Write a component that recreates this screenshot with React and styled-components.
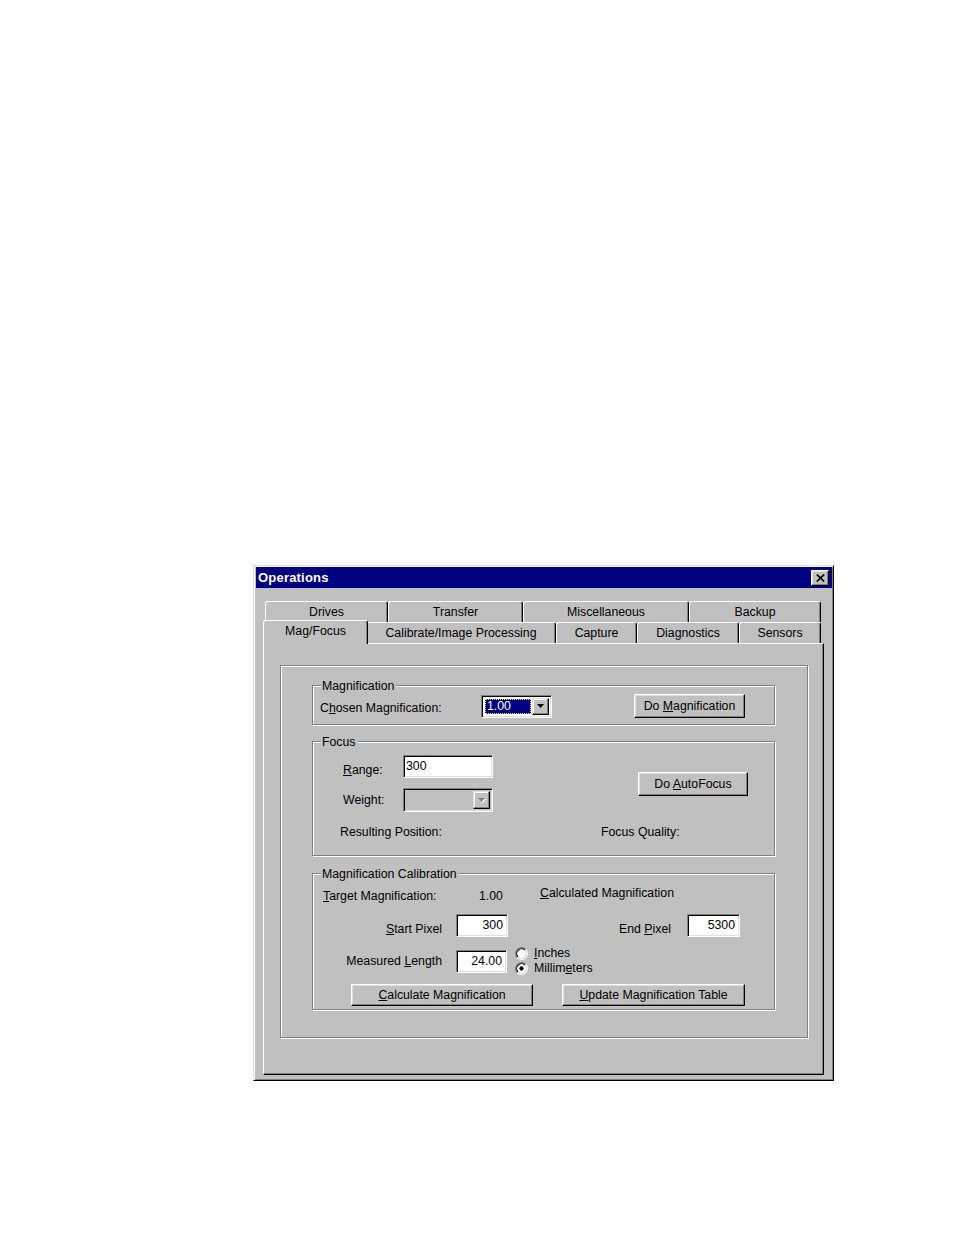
import React from 'react';
import styled, { createGlobalStyle, css } from 'styled-components';

const FACE = '#c0c0c0';

const Global = createGlobalStyle`
  html, body { margin: 0; padding: 0; background: #fff; }
  body {
    font-family: "Liberation Sans", Arial, sans-serif;
    font-size: 12.3px;
    color: #000;
  }
`;

const Page = styled.div`
  box-sizing: border-box;
  min-height: 1235px;
  padding: 565px 0 0 253px;
`;

const Window = styled.div`
  box-sizing: border-box;
  width: 581px;
  height: 516px;
  background: ${FACE};
  border: 1px solid;
  border-color: #dfdfdf #000 #000 #dfdfdf;
  box-shadow: inset 1px 1px #fff, inset -1px -1px #808080;
  padding: 1px 1px 1px 2px;
  display: flex;
  flex-direction: column;
`;

const TitleBar = styled.div`
  height: 21px;
  flex-shrink: 0;
  background: #000080;
  display: flex;
  align-items: center;
  justify-content: space-between;
  padding: 0 3px 0 2px;
`;

const Title = styled.span`
  color: #fff;
  font-weight: bold;
  font-size: 13px;
  letter-spacing: 0.2px;
`;

const CloseButton = styled.div`
  box-sizing: border-box;
  width: 18px;
  height: 16px;
  background: ${FACE};
  border: 1px solid;
  border-color: #fff #000 #000 #fff;
  box-shadow: inset -1px -1px #808080, inset 1px 1px #dfdfdf;
  display: flex;
  align-items: center;
  justify-content: center;
`;

const Body = styled.div`
  flex: 1;
  display: flex;
  flex-direction: column;
  padding: 13px 8px 4px 7px;
`;

const TabStrip = styled.div`
  display: flex;
  flex-direction: column;
  padding: 0 2px;
`;

const TabRow = styled.div`
  display: flex;
  height: 21px;
`;

const Tab = styled.div`
  box-sizing: border-box;
  flex-shrink: 0;
  width: ${p => p.$w}px;
  height: 21px;
  display: flex;
  align-items: center;
  justify-content: center;
  background: ${FACE};
  border-top: 1px solid #fff;
  border-left: 1px solid #fff;
  border-right: 1px solid #000;
  border-radius: 3px 3px 0 0;
  box-shadow: inset -1px 0 #808080;
  white-space: nowrap;
  ${p => p.$active && css`
    position: relative;
    z-index: 2;
    width: ${p.$w + 4}px;
    height: 24px;
    margin: -2px -2px -1px;
    padding-bottom: 4px;
  `}
`;

const Panel = styled.div`
  box-sizing: border-box;
  flex: 1;
  background: ${FACE};
  border: 1px solid;
  border-color: #fff #000 #000 #fff;
  box-shadow: inset -1px -1px #808080;
  padding: 21px 15px 0 16px;
`;

const Frame = styled.div`
  box-sizing: border-box;
  height: 373px;
  border: 1px solid #808080;
  box-shadow: inset 1px 1px #fff, 1px 1px #fff;
  padding: 19px 32px 0 31px;
  display: flex;
  flex-direction: column;
`;

const Group = styled.div`
  box-sizing: border-box;
  height: ${p => p.$h}px;
  margin-top: ${p => p.$mt || 0}px;
  border: 1px solid #808080;
  box-shadow: inset 1px 1px #fff, 1px 1px #fff;
  display: flex;
  flex-direction: column;
  flex-shrink: 0;
`;

const Legend = styled.span`
  align-self: flex-start;
  margin: -7px 0 0 8px;
  padding: 0 2px 0 1px;
  line-height: 15px;
  background: ${FACE};
  white-space: nowrap;
`;

const Row = styled.div`
  display: flex;
  align-items: center;
  margin-top: ${p => p.$mt || 0}px;
  padding-left: ${p => p.$pl || 0}px;
  min-height: ${p => p.$h || 15}px;
`;

const Label = styled.span`
  flex-shrink: 0;
  width: ${p => (p.$w ? `${p.$w}px` : 'auto')};
  text-align: ${p => p.$align || 'left'};
  margin-right: ${p => p.$mr || 0}px;
  position: relative;
  top: ${p => p.$dy || 0}px;
  line-height: 15px;
  white-space: nowrap;
`;

const Key = styled.span`
  text-decoration: underline;
  text-underline-offset: 1px;
`;

const Button = styled.div`
  box-sizing: border-box;
  flex-shrink: 0;
  width: ${p => p.$w}px;
  height: ${p => p.$h || 24}px;
  margin-left: ${p => p.$ml || 0}px;
  background: ${FACE};
  border: 1px solid;
  border-color: #fff #000 #000 #fff;
  box-shadow: inset -1px -1px #808080, inset 1px 1px #dfdfdf;
  display: flex;
  align-items: center;
  justify-content: center;
  white-space: nowrap;
`;

const Field = styled.div`
  box-sizing: border-box;
  flex-shrink: 0;
  width: ${p => p.$w}px;
  height: ${p => p.$h || 23}px;
  background: ${p => (p.$disabled ? FACE : '#fff')};
  border: 1px solid;
  border-color: #808080 #fff #fff #808080;
  box-shadow: inset 1px 1px #000, inset -1px -1px #dfdfdf;
  display: flex;
  align-items: center;
  justify-content: ${p => (p.$right ? 'flex-end' : 'flex-start')};
  padding: ${p => (p.$right ? '0 4px 0 0' : '0 0 0 2px')};
  line-height: 15px;
`;

const Combo = styled(Field)`
  padding: 2px;
  align-items: stretch;
  justify-content: space-between;
`;

const Selected = styled.span`
  box-sizing: border-box;
  flex: 1;
  margin: 1px;
  background: #000080;
  color: #fff;
  outline: 1px dotted #f0f070;
  outline-offset: -1px;
  display: flex;
  align-items: center;
  padding-left: 2px;
`;

const DropButton = styled.div`
  box-sizing: border-box;
  width: 17px;
  flex-shrink: 0;
  background: ${FACE};
  border: 1px solid;
  border-color: #dfdfdf #000 #000 #dfdfdf;
  box-shadow: inset -1px -1px #808080, inset 1px 1px #fff;
  display: flex;
  align-items: center;
  justify-content: center;
`;

const Column = styled.div`
  display: flex;
  flex-direction: column;
  gap: ${p => p.$gap || 0}px;
  margin-left: ${p => p.$ml || 0}px;
  flex-shrink: 0;
`;

const RadioItem = styled.div`
  display: flex;
  align-items: center;
  gap: 6px;
  line-height: 15px;
  height: 15px;
`;

const Arrow = ({ disabled }) => (
  <svg width="8" height="5" viewBox="0 0 8 5">
    {disabled && <polygon points="1,1 8,1 4.5,5" fill="#fff" />}
    <polygon points="0,0 7,0 3.5,4" fill={disabled ? '#808080' : '#000'} />
  </svg>
);

const Radio = ({ checked }) => (
  <svg width="13" height="13" viewBox="0 0 12 12">
    <circle cx="6" cy="6" r="4.5" fill="#fff" />
    <path d="M2.11 9.89 A5.5 5.5 0 0 1 9.89 2.11" fill="none" stroke="#808080" strokeWidth="1" />
    <path d="M9.89 2.11 A5.5 5.5 0 0 1 2.11 9.89" fill="none" stroke="#fff" strokeWidth="1" />
    <path d="M2.82 9.18 A4.5 4.5 0 0 1 9.18 2.82" fill="none" stroke="#000" strokeWidth="1" />
    <path d="M9.18 2.82 A4.5 4.5 0 0 1 2.82 9.18" fill="none" stroke="#dfdfdf" strokeWidth="1" />
    {checked && <circle cx="6" cy="6" r="2" fill="#000" />}
  </svg>
);

const CloseGlyph = () => (
  <svg width="9" height="8" viewBox="0 0 9 8">
    <path d="M0.8 0.5 L8.2 7.5 M8.2 0.5 L0.8 7.5" stroke="#000" strokeWidth="1.7" fill="none" />
  </svg>
);

const backTabs = [
  ['Drives', 123],
  ['Transfer', 135],
  ['Miscellaneous', 166],
  ['Backup', 132],
];

const frontTabs = [
  ['Mag/Focus', 101, true],
  ['Calibrate/Image Processing', 190],
  ['Capture', 81],
  ['Diagnostics', 102],
  ['Sensors', 82],
];

export default function App() {
  return (
    <Page>
      <Global />
      <Window>
        <TitleBar>
          <Title>Operations</Title>
          <CloseButton><CloseGlyph /></CloseButton>
        </TitleBar>
        <Body>
          <TabStrip>
            <TabRow>
              {backTabs.map(([t, w]) => <Tab key={t} $w={w}>{t}</Tab>)}
            </TabRow>
            <TabRow>
              {frontTabs.map(([t, w, a]) => <Tab key={t} $w={w} $active={a}>{t}</Tab>)}
            </TabRow>
          </TabStrip>
          <Panel>
            <Frame>
              <Group $h={40}>
                <Legend>Magnification</Legend>
                <Row $pl={7} $h={24}>
                  <Label $w={161} $dy={2}>C<Key>h</Key>osen Magnification:</Label>
                  <Combo $w={71} $h={23}>
                    <Selected>1.00</Selected>
                    <DropButton><Arrow /></DropButton>
                  </Combo>
                  <Button $w={111} $ml={82}><span>Do <Key>M</Key>agnification</span></Button>
                </Row>
              </Group>

              <Group $h={115} $mt={16}>
                <Legend>Focus</Legend>
                <Row $pl={30} $mt={5}>
                  <Column $gap={10}>
                    <Row>
                      <Label $w={60} $dy={4}><Key>R</Key>ange:</Label>
                      <Field $w={90} $h={23}>300</Field>
                    </Row>
                    <Row>
                      <Label $w={60}>Weight:</Label>
                      <Combo $w={90} $h={24} $disabled>
                        <span />
                        <DropButton><Arrow disabled /></DropButton>
                      </Combo>
                    </Row>
                  </Column>
                  <Button $w={110} $ml={145}><span>Do <Key>A</Key>utoFocus</span></Button>
                </Row>
                <Row $pl={27} $mt={13}>
                  <Label $w={261}>Resulting Position:</Label>
                  <Label>Focus Quality:</Label>
                </Row>
              </Group>

              <Group $h={137} $mt={17}>
                <Legend>Magnification Calibration</Legend>
                <Row $pl={10} $mt={7}>
                  <Label $w={156}><Key>T</Key>arget Magnification:</Label>
                  <Label $w={61}>1.00</Label>
                  <Label $dy={-3}><Key>C</Key>alculated Magnification</Label>
                </Row>
                <Row $mt={10} $h={23}>
                  <Label $w={129} $align="right" $mr={14} $dy={4}><Key>S</Key>tart Pixel</Label>
                  <Field $w={52} $right>300</Field>
                  <Label $w={163} $align="right" $mr={16} $dy={4}>End <Key>P</Key>ixel</Label>
                  <Field $w={53} $right>5300</Field>
                </Row>
                <Row $mt={9} $h={30}>
                  <Label $w={129} $align="right" $mr={14}>Measured <Key>L</Key>ength</Label>
                  <Field $w={51} $right>24.00</Field>
                  <Column $ml={8}>
                    <RadioItem><Radio /><span><Key>I</Key>nches</span></RadioItem>
                    <RadioItem><Radio checked /><span>Millim<Key>e</Key>ters</span></RadioItem>
                  </Column>
                </Row>
                <Row $pl={38} $mt={8}>
                  <Button $w={182} $h={22}><span><Key>C</Key>alculate Magnification</span></Button>
                  <Button $w={183} $h={22} $ml={29}><span><Key>U</Key>pdate Magnification Table</span></Button>
                </Row>
              </Group>
            </Frame>
          </Panel>
        </Body>
      </Window>
    </Page>
  );
}
